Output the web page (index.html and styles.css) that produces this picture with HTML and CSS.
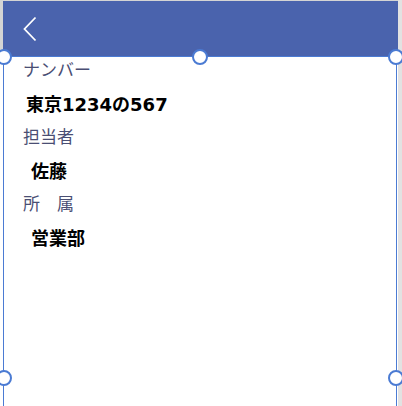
FILE: index.html
```html
<!DOCTYPE html>
<html lang="ja">
<head>
  <meta charset="UTF-8">
  <meta name="viewport" content="width=device-width, initial-scale=1.0">
  <title>詳細</title>
  <link rel="stylesheet" href="styles.css">
</head>
<body>

<div id="screen">
  <div id="header">
    <button class="back-button" aria-label="戻る">
      <svg width="16" height="26" viewBox="0 0 16 26">
        <polyline points="13.5,1.5 2.5,13 13.5,24.5" fill="none" stroke="#fff" stroke-width="1.8"/>
      </svg>
    </button>
  </div>

  <div id="detail">
    <div class="label">ナンバー</div>
    <div class="value plate">東京1234の567</div>
    <div class="label">担当者</div>
    <div class="value">佐藤</div>
    <div class="label">所　属</div>
    <div class="value">営業部</div>
  </div>

  <div id="selection">
    <span class="handle top-left"></span>
    <span class="handle top-mid"></span>
    <span class="handle top-right"></span>
    <span class="handle mid-left"></span>
    <span class="handle mid-right"></span>
  </div>
</div>

</body>
</html>
```

FILE: styles.css
```css
html {
  overflow: hidden;
}

body {
  margin: 0;
  padding: 0;
  background: linear-gradient(to left, #e2e2e2 4px, #fff 4px);
  font-family: "Noto Sans CJK JP", "Noto Sans", sans-serif;
}

#screen {
  position: relative;
  margin: 0 4px 0 3px;
  height: 406px;
  background: #fff;
}

#header {
  height: 55px;
  background: #4a63ad;
  border-top: 1px solid #d4d4d4;
  box-shadow: -3px 0 0 #d4d4d4;
  display: flex;
  align-items: center;
  padding-left: 19px;
}

.back-button {
  background: none;
  border: none;
  padding: 0;
  display: flex;
  cursor: pointer;
}

#detail {
  padding-top: 1px;
}

.label {
  font-size: 17px;
  line-height: 24px;
  color: #4a4e73;
  padding-left: 20px;
  margin-bottom: 11px;
}

.value {
  font-family: "DejaVu Sans", "Noto Sans CJK JP", sans-serif;
  font-size: 18px;
  font-weight: bold;
  line-height: 26px;
  color: #000;
  padding-left: 28px;
  margin-bottom: 6px;
}

.value.plate {
  padding-left: 23px;
}

#selection {
  position: absolute;
  left: 0;
  top: 56px;
  width: 392px;
  height: 349px;
  border: 1.5px solid #4b7bd3;
  border-bottom: none;
  pointer-events: none;
}

.handle {
  position: absolute;
  width: 12px;
  height: 12px;
  border: 2px solid #4b7bd3;
  border-radius: 50%;
  background: #fff;
}

.top-left { left: -8px; top: -8px; }
.top-mid { left: 188px; top: -8px; }
.top-right { right: -8px; top: -8px; }
.mid-left { left: -8px; top: 313px; }
.mid-right { right: -8px; top: 313px; }
```
